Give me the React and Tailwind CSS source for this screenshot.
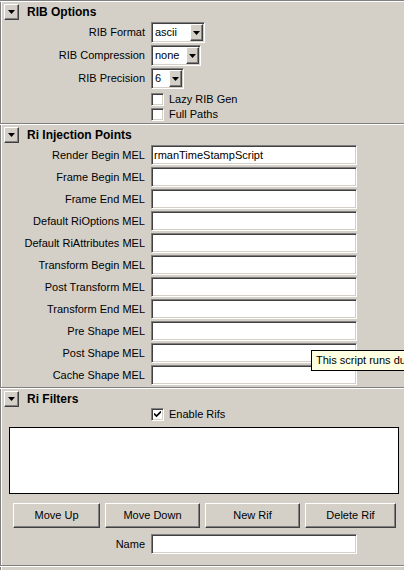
import React from 'react';

const raised =
  'border border-t-white border-l-white border-r-[#404040] border-b-[#404040] shadow-[inset_-1px_-1px_0_#808080]';
const sunken =
  'border border-t-[#808080] border-l-[#808080] border-r-white border-b-white shadow-[inset_1px_1px_0_#404040,inset_-1px_-1px_0_#d4d0c8]';

function Arrow({ className = '' }) {
  return (
    <svg width="7" height="4" viewBox="0 0 7 4" className={className}>
      <path d="M0 0h7L3.5 4z" fill="#000" />
    </svg>
  );
}

function Section({ title, children, className = '' }) {
  return (
    <div className={className}>
      <div className="border-t border-t-[#808080] border-b border-b-white" />
      <div className="flex items-center h-4 mt-[2px] pl-1">
        <div className={`w-[15px] h-4 flex items-center justify-center bg-[#d4d0c8] ${raised}`}>
          <Arrow />
        </div>
        <span className="ml-2 font-bold text-[12px] leading-none">{title}</span>
      </div>
      {children}
    </div>
  );
}

function Row({ label, children, h = 'h-5' }) {
  return (
    <div className={`flex items-center ${h}`}>
      <div className="w-[145px] text-right whitespace-nowrap">{label}</div>
      <div className="ml-[6px] flex items-center">{children}</div>
    </div>
  );
}

function Dropdown({ value, w }) {
  return (
    <div className={`h-[21px] bg-white flex items-center justify-between pl-[3px] pr-px ${sunken}`} style={{ width: w }}>
      <span>{value}</span>
      <div className={`w-[13px] h-[17px] flex items-center justify-center bg-[#d4d0c8] ${raised}`}>
        <Arrow />
      </div>
    </div>
  );
}

function TextField({ value = '' }) {
  return (
    <div className={`w-[206px] h-5 bg-white flex items-center pl-[2px] ${sunken}`}>
      <span className="whitespace-nowrap">{value}</span>
    </div>
  );
}

function CheckBox({ checked, label }) {
  return (
    <div className="flex items-center">
      <div className={`w-[13px] h-[13px] bg-white flex items-center justify-center ${sunken}`}>
        {checked && (
          <svg width="7" height="7" viewBox="0 0 7 7">
            <path d="M0 2.5l2.5 2.5L7 0.5" stroke="#000" strokeWidth="1.6" fill="none" />
          </svg>
        )}
      </div>
      <span className="ml-[5px] whitespace-nowrap">{label}</span>
    </div>
  );
}

function Button({ label, w }) {
  return (
    <div className={`h-[25px] flex items-center justify-center bg-[#d4d0c8] ${raised}`} style={{ width: w }}>
      {label}
    </div>
  );
}

const melFields = [
  'Render Begin MEL',
  'Frame Begin MEL',
  'Frame End MEL',
  'Default RiOptions MEL',
  'Default RiAttributes MEL',
  'Transform Begin MEL',
  'Post Transform MEL',
  'Transform End MEL',
  'Pre Shape MEL',
  'Post Shape MEL',
  'Cache Shape MEL',
];

export default function App() {
  return (
    <div className="relative w-[404px] h-[570px] overflow-hidden bg-[#d4d0c8] text-black text-[11px] leading-none font-['Liberation_Sans',Arial,sans-serif]">
      <div className="h-full shadow-[inset_1px_0_0_#808080,inset_2px_0_0_#fff]">
        <Section title="RIB Options" className="pb-[1px]">
          <div className="mt-[2px] flex flex-col gap-[2px]">
            <Row label="RIB Format" h="h-[21px]">
              <Dropdown value="ascii" w={54} />
            </Row>
            <Row label="RIB Compression" h="h-[21px]">
              <Dropdown value="none" w={50} />
            </Row>
            <Row label="RIB Precision" h="h-[21px]">
              <Dropdown value="6" w={33} />
            </Row>
          </div>
          <div className="mt-[3px] flex flex-col">
            <Row label="" h="h-[15px]">
              <CheckBox label="Lazy RIB Gen" />
            </Row>
            <Row label="" h="h-[15px]">
              <CheckBox label="Full Paths" />
            </Row>
          </div>
        </Section>

        <Section title="Ri Injection Points" className="pb-[2px]">
          <div className="mt-[2px] flex flex-col gap-[2px]">
            {melFields.map((f, i) => (
              <Row key={f} label={f}>
                <TextField value={i === 0 ? 'rmanTimeStampScript' : ''} />
              </Row>
            ))}
          </div>
        </Section>

        <Section title="Ri Filters">
          <Row label="" h="h-[14px]">
            <CheckBox checked label="Enable Rifs" />
          </Row>
          <div className="mt-[6px] ml-[9px] mr-[5px] h-[67px] bg-white border border-black" />
          <div className="mt-[9px] pl-[13px] flex gap-[5px]">
            <Button label="Move Up" w={87} />
            <Button label="Move Down" w={95} />
            <Button label="New Rif" w={95} />
            <Button label="Delete Rif" w={91} />
          </div>
          <div className="mt-[6px]">
            <Row label="Name">
              <TextField />
            </Row>
          </div>
          <div className="mt-[11px] border-t border-t-[#808080] border-b border-b-white" />
        </Section>
      </div>

      <div className="absolute left-[311px] top-[350px] h-[21px] w-[110px] bg-[#ffffe1] border border-black flex items-center pl-[4px] whitespace-nowrap">
        This script runs during
      </div>
    </div>
  );
}
